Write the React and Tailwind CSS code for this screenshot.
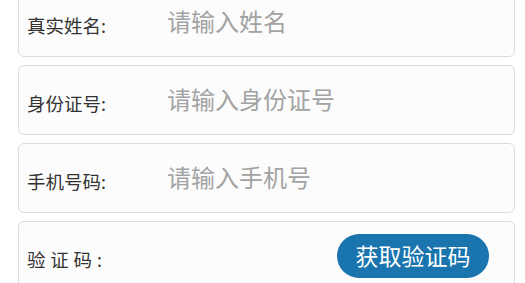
import React from 'react';

const fields = [
  { label: '真实姓名:', placeholder: '请输入姓名' },
  { label: '身份证号:', placeholder: '请输入身份证号' },
  { label: '手机号码:', placeholder: '请输入手机号' },
];

export default function App() {
  return (
    <div
      className="w-[525px] h-[283px] overflow-hidden bg-white"
      style={{ fontFamily: '"Noto Sans", "Noto Sans CJK SC", sans-serif' }}
    >
      <div className="flex flex-col gap-[8px] px-[18px] -mt-[13px] pr-[10px]">
        {fields.map((f) => (
          <div
            key={f.label}
            className="flex items-center h-[70px] rounded-[6px] border border-[#dcdcdc] bg-[#fcfcfc] pl-[8px]"
          >
            <span className="w-[140px] shrink-0 pt-[8px] text-[18.5px] text-[#333333]">
              {f.label}
            </span>
            <input
              className="flex-1 min-w-0 bg-transparent outline-none text-[24px] text-[#333333] placeholder:text-[#a3a3a3]"
              placeholder={f.placeholder}
            />
          </div>
        ))}

        {/* verification code row */}
        <div className="flex items-center justify-between h-[70px] rounded-[6px] border border-[#dcdcdc] bg-[#fcfcfc] pl-[8px] pr-[25px]">
          <span className="pt-[8px] text-[18.5px] text-[#333333]">验 证 码 :</span>
          <button className="w-[152px] h-[44px] rounded-full bg-[#1a74ae] text-white text-[23px]">
            获取验证码
          </button>
        </div>
      </div>
    </div>
  );
}
